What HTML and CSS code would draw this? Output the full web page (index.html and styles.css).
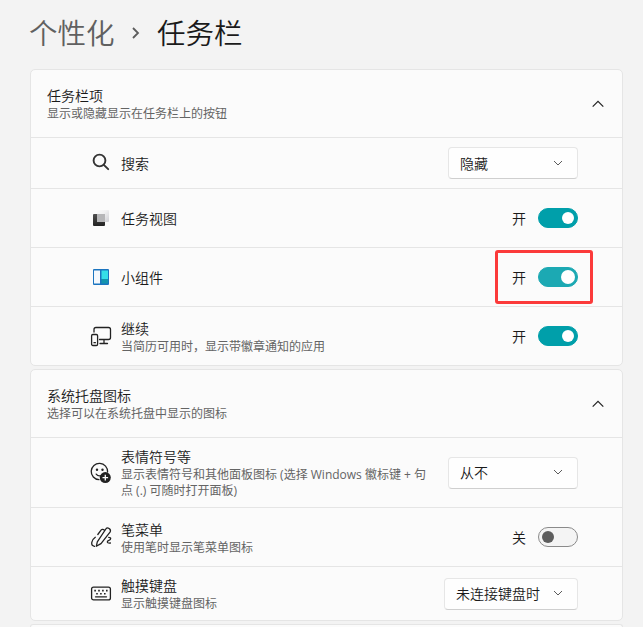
FILE: index.html
```html
<!DOCTYPE html>
<html lang="zh-CN">
<head>
<meta charset="utf-8">
<title>任务栏</title>
<link rel="stylesheet" href="styles.css">
</head>
<body>
<h1 class="breadcrumb">
  <span class="parent">个性化</span>
  <svg class="sep" width="8" height="14" viewBox="0 0 8 14"><path d="M1 2l5 5-5 5"/></svg>
  <span>任务栏</span>
</h1>
<main>
<section class="card">
  <header class="row head">
    <div class="text"><h2>任务栏项</h2><p>显示或隐藏显示在任务栏上的按钮</p></div>
    <svg class="chev" width="12" height="8" viewBox="0 0 12 8"><path d="M.7 6.7L6 1.4l5.300 5.300"/></svg>
  </header>
  <div class="row search">
    <svg class="icon" viewBox="0 0 24 24"><g class="line heavy"><circle cx="10.500" cy="9.500" r="5.900"/><path d="M14.800 13.800l4.400 4.400"/></g></svg>
    <div class="text"><h3>搜索</h3></div>
    <div class="select"><span>隐藏</span><svg width="10" height="6" viewBox="0 0 10 6"><path d="M1 1l4 4 4-4"/></svg></div>
  </div>
  <div class="row">
    <svg class="icon" viewBox="0 0 24 24">
      <defs>
        <linearGradient id="pale" x1="0" y1="0" x2="1" y2="1"><stop offset="0" stop-color="#fafafa"/><stop offset=".4" stop-color="#f1f1f2"/><stop offset="1" stop-color="#cfcfd4"/></linearGradient>
        <linearGradient id="dark" x1="0" y1="0" x2="0" y2="1"><stop offset="0" stop-color="#505050"/><stop offset="1" stop-color="#222"/></linearGradient>
      </defs>
      <rect x="8" y="4" width="12" height="12" rx="1" fill="url(#pale)"/>
      <rect x="4" y="8" width="12" height="12" rx="1" fill="url(#dark)"/>
      <path d="M8 8h8v8H8z" fill="#b6b6b8"/>
    </svg>
    <div class="text"><h3>任务视图</h3></div>
    <span class="state">开</span><span class="toggle on"></span>
  </div>
  <div class="row">
    <svg class="icon" viewBox="0 0 24 24">
      <rect x="4" y="4" width="16" height="16" rx="1" fill="#1b74bf"/>
      <path d="M5 5.500h6v13H5z" fill="#f4f8fc"/>
      <path d="M12.500 5.500H19V14h-6.500z" fill="#35dfe8"/>
      <path d="M12.500 14H19v4.500h-6.500z" fill="#1394ad"/>
    </svg>
    <div class="text"><h3>小组件</h3></div>
    <div class="marked"><span class="state">开</span><span class="toggle on hover"></span></div>
  </div>
  <div class="row">
    <svg class="icon" viewBox="0 0 24 24"><g class="line"><path d="M5 8V5.500a2 2 0 0 1 2-2h12.500a2 2 0 0 1 2 2v8a2 2 0 0 1-2 2H10.500M15 15.500v3.800M11 19.500h7.500"/><rect x="2.600" y="10.500" width="6" height="11" rx="1.300"/><path d="M5 18.700h1.400"/></g></svg>
    <div class="text"><h3>继续</h3><p>当简历可用时，显示带徽章通知的应用</p></div>
    <span class="state">开</span><span class="toggle on"></span>
  </div>
</section>

<section class="card">
  <header class="row head">
    <div class="text"><h2>系统托盘图标</h2><p>选择可以在系统托盘中显示的图标</p></div>
    <svg class="chev" width="12" height="8" viewBox="0 0 12 8"><path d="M.7 6.700L6 1.400l5.300 5.300"/></svg>
  </header>
  <div class="row emoji">
    <svg class="icon" viewBox="0 0 24 24"><g class="line"><path d="M10 18.700A8.200 8.200 0 1 1 18.600 11M7.200 13.100q1.700 2.300 4.600 1.700"/></g><circle cx="8" cy="8.800" r="1.200"/><circle cx="13.500" cy="8.800" r="1.200"/><circle cx="16.300" cy="16.600" r="5.500"/><path d="M16.300 13.800v5.600M13.500 16.600h5.600" stroke="#fff" stroke-width="1.300"/></svg>
    <div class="text"><h3>表情符号等</h3><p>显示表情符号和其他面板图标 (选择 Windows 徽标键 + 句<br>点 (.) 可随时打开面板)</p></div>
    <div class="select"><span>从不</span><svg width="10" height="6" viewBox="0 0 10 6"><path d="M1 1l4 4 4-4"/></svg></div>
  </div>
  <div class="row">
    <svg class="icon" viewBox="0 0 24 24"><g class="line"><path d="M7.300 21.300l1-4.500L17.200 3.500c1.300-1.600 5.200.5 4 3.300L12 18.600z"/><path d="M15.500 5.200c-1.600-1.500-3-.8-4 .6L8.800 9.500M6.300 12.300c-3.600 2.400-5.500 8.100-.8 9M19.700 12.300c2.800 0 2.400 2.300.2 3-2.300.7-2.400 3.200 1.500 2.700"/></g></svg>
    <div class="text"><h3>笔菜单</h3><p>使用笔时显示笔菜单图标</p></div>
    <span class="state">关</span><span class="toggle"></span>
  </div>
  <div class="row touch">
    <svg class="icon" viewBox="0 0 24 24"><g class="line"><rect x="2.600" y="5.100" width="18.800" height="12.800" rx="2"/><path d="M6.500 14.800h11"/></g><path d="M5.300 7.800h1.600v1.600H5.300zm3.900 0h1.600v1.600H9.200zm3.900 0h1.600v1.600h-1.600zm3.900 0h1.600v1.600H17zM7.200 11h1.600v1.600H7.200zm3.900 0h1.600v1.600h-1.600zm3.900 0h1.600v1.600H15z"/></svg>
    <div class="text"><h3>触摸键盘</h3><p>显示触摸键盘图标</p></div>
    <div class="select wide"><span>未连接键盘时</span><svg width="10" height="6" viewBox="0 0 10 6"><path d="M1 1l4 4 4-4"/></svg></div>
  </div>
</section>
<section class="card partial"></section>
</main>
</body>
</html>
```
FILE: styles.css
```css
* { box-sizing: border-box; }
body {
  margin: 0;
  background: #f3f3f3;
  color: #1a1a1a;
  font-family: "Open Sans", "Noto Sans CJK SC", sans-serif;
  font-size: 14px;
  font-weight: 350;
}
h1, h2, h3, p { margin: 0; font-weight: 350; }
svg { display: block; flex: none; fill: none; stroke: #5c5c5c; }
.breadcrumb {
  display: flex;
  align-items: center;
  height: 69px;
  padding: 0 0 3px 29px;
  font-size: 28.500px;
  line-height: 40px;
}
.parent { color: #606060; }
.sep { margin: 0 17.500px 0 17px; stroke-width: 1.800; }
main { display: grid; gap: 3px; width: 593px; margin-left: 30px; }
.card {
  border: 1px solid #e5e5e5;
  border-radius: 5px;
  background: #fbfbfb;
}
.card.partial { height: 3px; border-bottom: 0; border-radius: 5px 5px 0 0; }
.row {
  display: flex;
  align-items: center;
  height: 59px;
  padding: 0 44px 0 58px;
  border-bottom: 1px solid #e5e5e5;
}
.row:last-child { height: 58px; border-bottom: 0; }
.row.head { height: 68px; padding: 0 18px 0 16px; }
.row.search { height: 51px; }
.row.emoji { height: 70px; }
.row.touch { height: 53px; }
.text { flex: 1; padding-top: 2px; white-space: nowrap; }
.head .text, .emoji .text, .touch .text { padding-top: 1px; }
h2, h3 { font-size: 14px; line-height: 18px; }
p { margin-top: 1px; color: #646464; font-size: 12px; font-weight: 400; line-height: 16px; }
.icon { width: 24px; height: 24px; margin-right: 8px; fill: #222; stroke: none; }
.line { fill: none; stroke: #222; stroke-width: 1.300; stroke-linecap: round; stroke-linejoin: round; }
.heavy { stroke-width: 1.900; stroke: #333; }
.chev { stroke: #222; stroke-width: 1.200; }
.select {
  display: flex;
  align-items: center;
  justify-content: space-between;
  width: 130px;
  height: 32px;
  padding: 0 14px 1px 11px;
  border: 1px solid #e6e6e6;
  border-bottom-color: #cfcfcf;
  border-radius: 4px;
  background: #fefefe;
}
.select.wide { width: 134px; }
.state { margin-right: 12px; }
.toggle {
  display: flex;
  align-items: center;
  width: 40px;
  height: 20px;
  padding: 0 3px;
  border: 1px solid #8a8a8a;
  border-radius: 10px;
  background: #f4f4f4;
}
.toggle::before { content: ""; width: 12px; height: 12px; border-radius: 50%; background: #5d5d5d; }
.toggle.on { justify-content: flex-end; border-color: #009faa; background: #009faa; }
.toggle.on::before { background: #fff; }
.toggle.hover { padding-right: 2px; border-color: #1ca9b3; background: #1ca9b3; }
.toggle.hover::before { width: 14px; height: 14px; }
.marked {
  display: flex;
  align-items: center;
  height: 54px;
  margin-right: -15px;
  padding: 0 12px 0 14px;
  border: 3px solid #fb3a3a;
  border-radius: 3px;
}
```
